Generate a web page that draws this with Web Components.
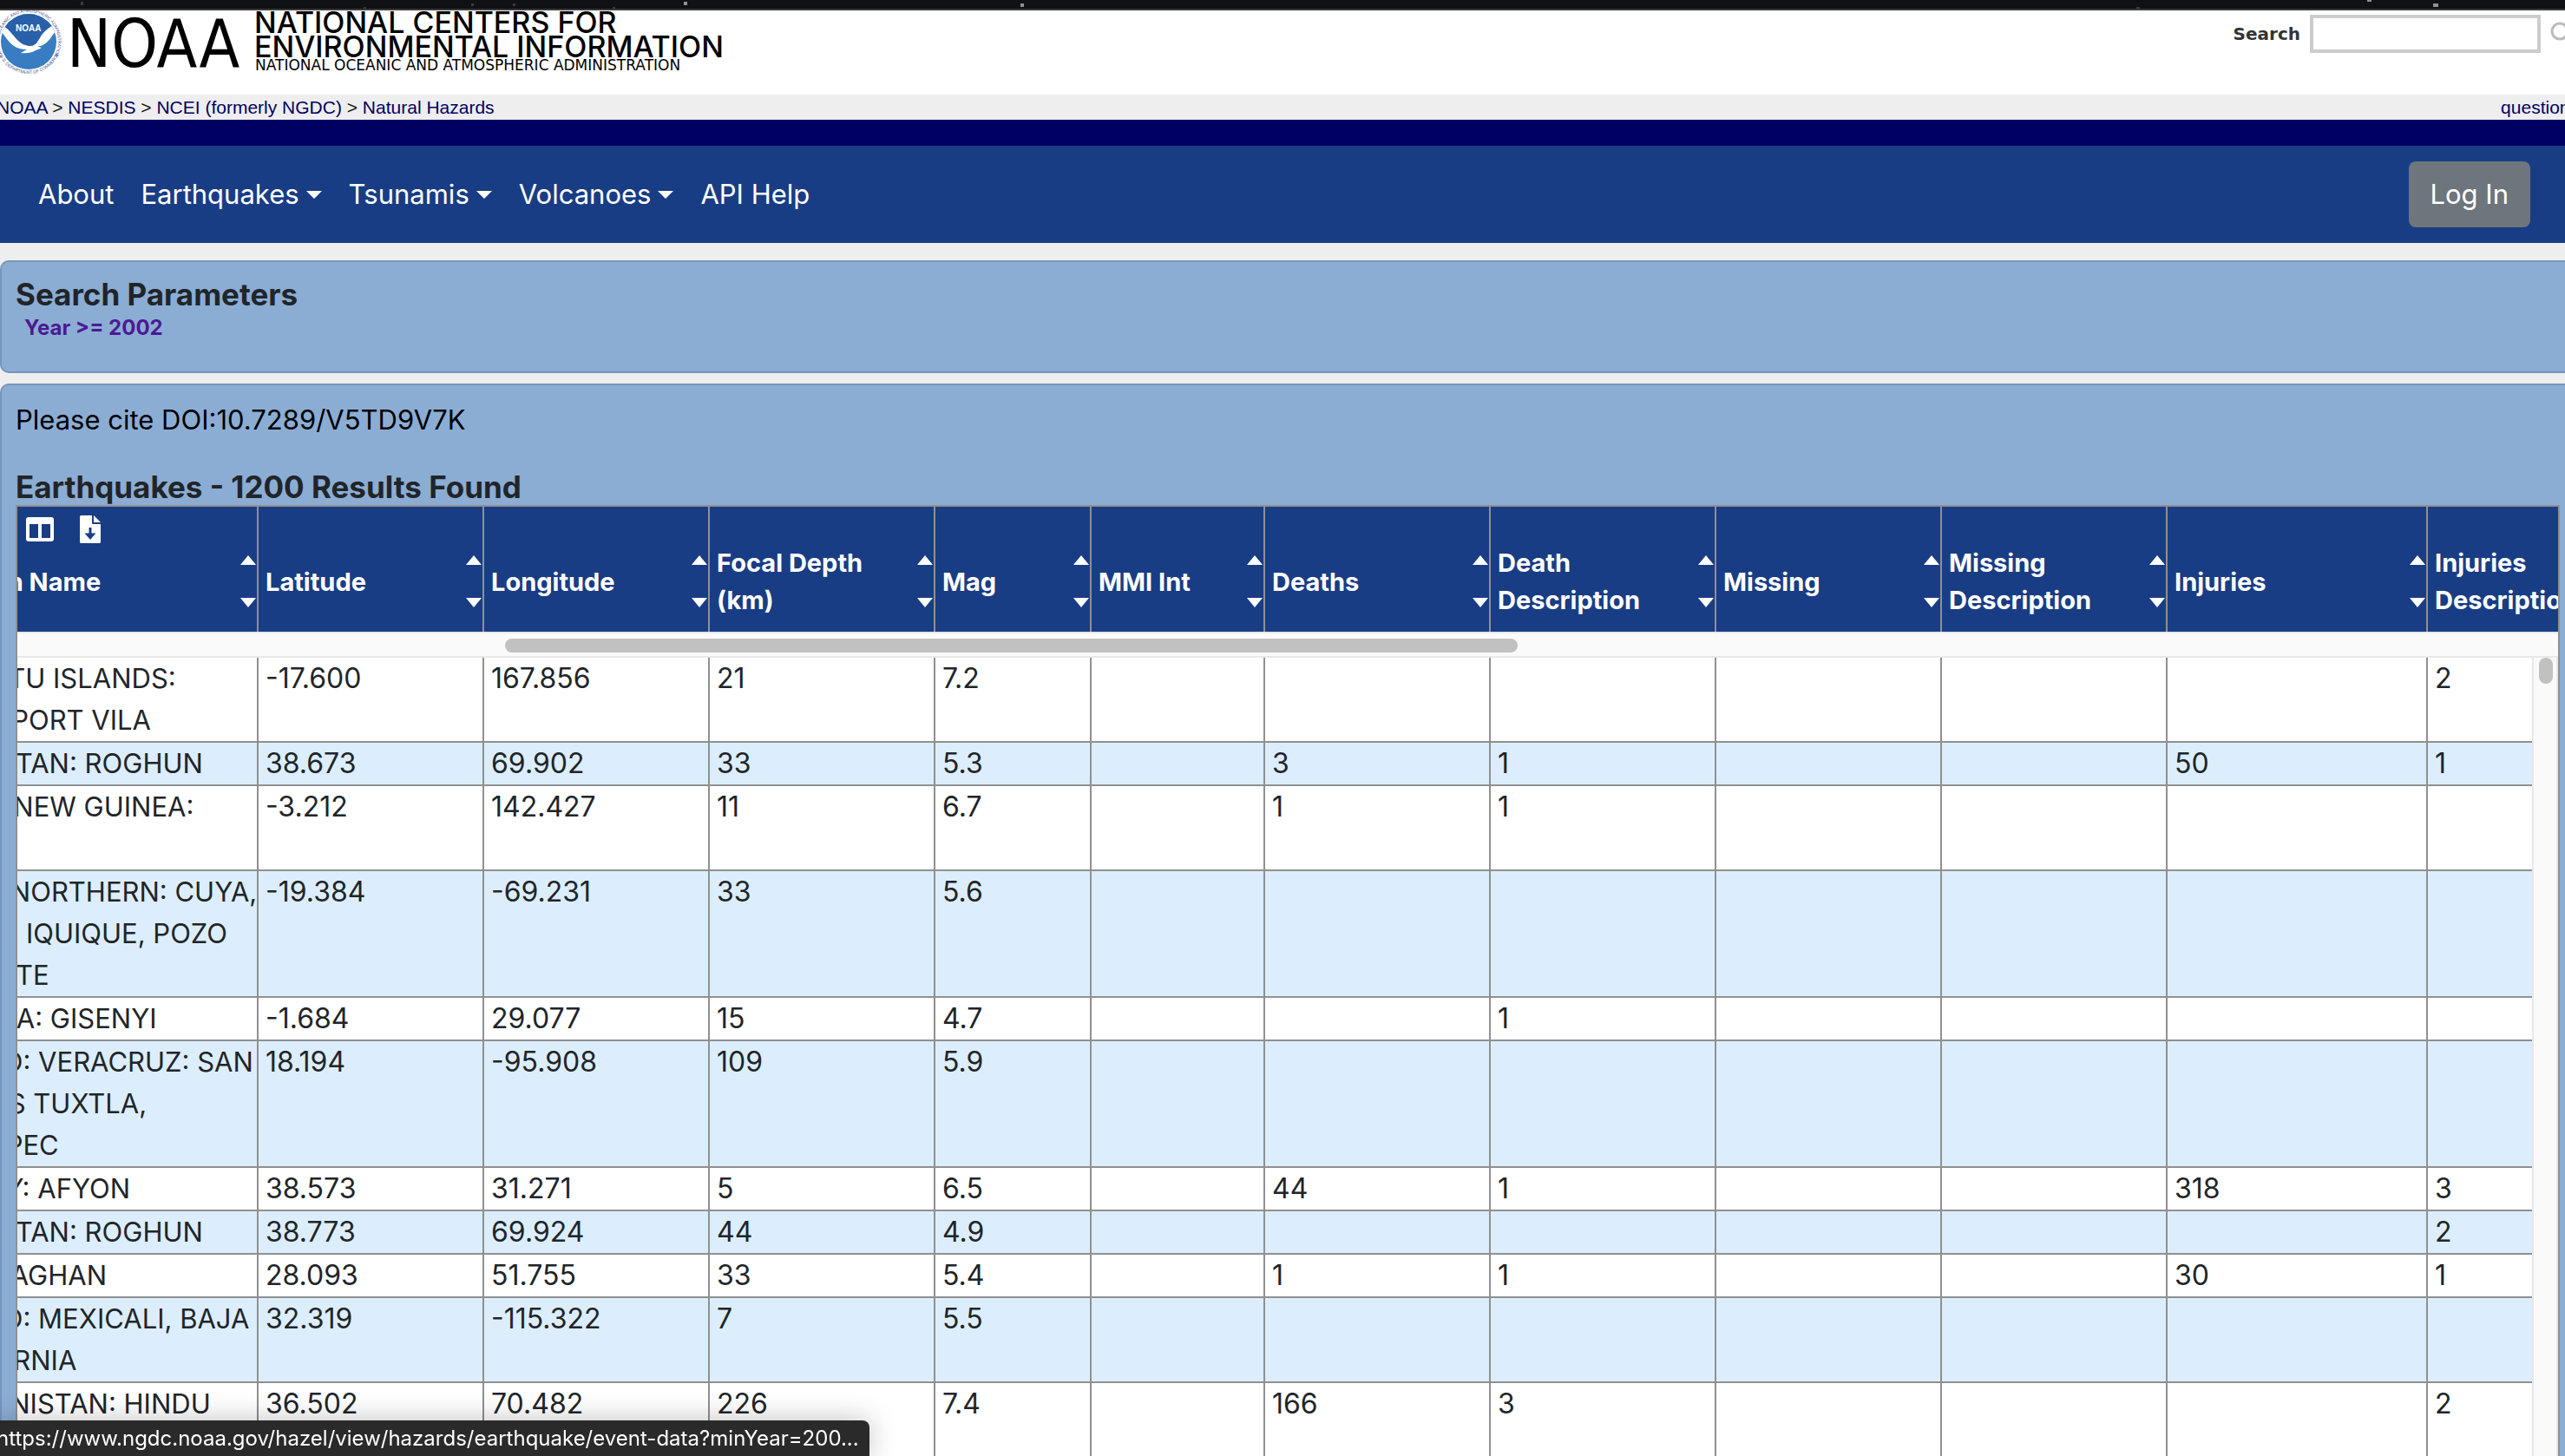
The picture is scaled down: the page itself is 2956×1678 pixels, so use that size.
<!DOCTYPE html>
<html lang="en">
<head>
<meta charset="utf-8">
<title>NCEI Hazards - Significant Earthquakes</title>
<style>
  html, body { margin: 0; height: 100%; }
  body { background: #eee; font: 31px/48px Inter, "Liberation Sans", sans-serif; color: #212529; overflow: hidden; }
  .page { display: flex; flex-direction: column; height: 100%; margin-right: -12px; }
  .cards { display: flex; flex-direction: column; gap: 12px; flex: 1; min-height: 0; margin-top: 20px; }
  .results { flex: 1; min-height: 0; padding-bottom: 0; border-bottom: 0; }
</style>
</head>
<body>
<div class="page">
  <star-strip></star-strip>
  <noaa-masthead></noaa-masthead>
  <crumb-bar></crumb-bar>
  <nav-bar>
    <nav-entry>About</nav-entry>
    <nav-entry menu>Earthquakes</nav-entry>
    <nav-entry menu>Tsunamis</nav-entry>
    <nav-entry menu>Volcanoes</nav-entry>
    <nav-entry>API Help</nav-entry>
  </nav-bar>
  <main class="cards">
    <panel-card heading="Search Parameters"><search-filter>Year &gt;= 2002</search-filter></panel-card>
    <panel-card class="results" heading="Earthquakes - 1200 Results Found">
      <cite-note slot="lead">Please cite DOI:10.7289/V5TD9V7K</cite-note>
      <results-grid></results-grid>
    </panel-card>
  </main>
</div>
<link-status>https://www.ngdc.noaa.gov/hazel/view/hazards/earthquake/event-data?minYear=200...</link-status>

<script>
const define = (name, html, setup) => customElements.define(name, class extends HTMLElement {
  constructor() {
    super();
    this.attachShadow({ mode: 'open' }).innerHTML = html;
  }
  connectedCallback() { if (setup) setup(this, this.shadowRoot); }
});

define('star-strip', `
<style>
  :host { display: block; flex: none; height: 10px; background: #101114; border-bottom: 2px solid #3b3839; overflow: hidden; }
  svg { display: block; }
</style>
<svg width="2956" height="10" aria-hidden="true">
  <g fill="#3a3c42"><rect x="93" y="2" width="3" height="4"/><rect x="543" y="4" width="3" height="3"/><rect x="591" y="4" width="3" height="3"/><rect x="419" y="8" width="3" height="2"/><rect x="2462" y="8" width="4" height="2"/><rect x="706" y="8" width="3" height="2"/></g>
  <g fill="#8d9099"><rect x="788" y="2" width="4" height="4"/><rect x="2804" y="4" width="6" height="4"/><rect x="2728" y="0" width="5" height="2"/><rect x="1176" y="4" width="4" height="4"/></g>
</svg>`);

define('noaa-masthead', `
<style>
  :host { display: flex; flex: none; justify-content: space-between; align-items: flex-start; height: 97px; background: #fff; }
  svg { display: block; }
  form { display: flex; align-items: center; gap: 11px; margin: 5px 3px 0 0; }
  label { font: bold 20px/24px "DejaVu Sans", sans-serif; color: #333; }
  input { box-sizing: border-box; width: 266px; height: 44px; border: 4px solid #ccc; background: #fff; font-size: 24px; padding: 0 8px; }
  button { border: 0; background: none; padding: 0; }
</style>
<svg width="900" height="84" role="img" aria-label="NOAA National Centers for Environmental Information">
  <defs>
    <clipPath id="disc"><circle cx="33" cy="36" r="32"/></clipPath>
    <path id="ringTop" d="M3.600 53A34 34 0 1 1 62.400 53"/>
    <path id="ringLow" d="M-2 49A37.500 37.500 0 0 0 68 49"/>
  </defs>
  <g clip-path="url(#disc)">
    <rect y="3" width="68" height="68" fill="#387dc2"/>
    <path d="M0 0H68V18Q56 32 44 40L33 42L22 38Q10 32 0 12Z" fill="#2860aa"/>
    <path d="M-1 16C8 18 14 28 20 34C25 39 30 41 35 41C42 41 44 34 49 27C53 22 59 18 65 15L64 24C58 32 56 36 51 39C48 41 46 41 43 41.500L48 43Q45 45 41 46Q35 50 24 49L31 45Q22 45 16 41C8 35 4 26 -1 22Z" fill="#fff"/>
  </g>
  <text x="18" y="24" font-family="Liberation Sans" font-weight="bold" font-size="10" fill="#fff">NOAA</text>
  <g font-family="Liberation Sans" font-size="5" fill="#3f4f8c">
    <text><textPath href="#ringTop">NATIONAL OCEANIC AND ATMOSPHERIC ADMINISTRATION</textPath></text>
    <text><textPath href="#ringLow" startOffset="4">U.S. DEPARTMENT OF COMMERCE</textPath></text>
  </g>
  <g fill="#000">
    <text x="77" y="65" font-family="DejaVu Sans Condensed, Liberation Sans" font-size="76">NOAA</text>
    <g font-family="Inter" font-size="34" font-weight="500">
      <text x="293" y="26">NATIONAL CENTERS FOR</text>
      <text x="293" y="54">ENVIRONMENTAL INFORMATION</text>
    </g>
    <text x="294" y="69" font-family="DejaVu Sans" font-size="17">NATIONAL OCEANIC AND ATMOSPHERIC ADMINISTRATION</text>
  </g>
</svg>
<form>
  <label for="q">Search</label>
  <input id="q" type="text">
  <button type="button" aria-label="Search"><svg width="26" height="32" viewBox="0 0 26 32"><circle cx="11" cy="13" r="9" fill="none" stroke="#bbb" stroke-width="3"/><path d="M17 20l7 8" stroke="#bbb" stroke-width="4"/></svg></button>
</form>`);

define('crumb-bar', `
<style>
  :host { display: flex; flex: none; justify-content: space-between; margin: 0 -4px; background: #eee; border-bottom: 30px solid #000062; font: 21px/29px "Liberation Sans", sans-serif; color: #111; }
  nav { white-space: nowrap; }
  a { color: #000064; text-decoration: none; }
</style>
<nav><a href="#noaa">NOAA</a> &gt; <a href="#nesdis">NESDIS</a> &gt; <a href="#ncei">NCEI (formerly NGDC)</a> &gt; <a href="#hazards">Natural Hazards</a></nav>
<a href="#questions">questions</a>`);

define('nav-bar', `
<style>
  :host { display: flex; flex: none; align-items: center; justify-content: space-between; height: 112px; padding: 0 52px 0 44px; background: #193d84; color: #fff; }
  nav { display: flex; gap: 31px; }
  button { font: inherit; color: #fff; background: #6e757c; border: 0; border-radius: 8px; padding: 14px 25px; }
</style>
<nav><slot></slot></nav>
<button type="button">Log In</button>`);

define('nav-entry', `
<style>
  :host { display: block; }
  a { display: flex; align-items: center; gap: 8px; color: #fff; text-decoration: none; }
  :host([menu]) a::after { content: ""; border: 9px solid transparent; border-top-color: #fff; border-bottom: 0; }
</style>
<a href="#menu"><slot></slot></a>`);

define('panel-card', `
<style>
  :host { display: flex; flex-direction: column; background: #8badd4; border: 2px solid #7596bb; border-radius: 10px; padding: 16px; }
  h2 { margin: 0; font: bold 35px/42px Inter, sans-serif; }
</style>
<slot name="lead"></slot><h2></h2><slot></slot>`,
(el, root) => { root.querySelector('h2').textContent = el.getAttribute('heading'); });

define('search-filter', `
<style>
  :host { display: block; padding-left: 10px; margin-bottom: 16px; font-size: 24px; line-height: 36px; font-weight: bold; }
  a { color: #4b1a93; text-decoration: none; }
</style><a href="#year"><slot></slot></a>`);

define('cite-note', `
<style>:host { display: block; color: #000; margin-bottom: 32px; }</style><slot></slot>`);

const columns = [['Location Name', 400], ['Latitude', 260], ['Longitude', 260], ['Focal Depth (km)', 260], ['Mag', 180],
  ['MMI Int', 200], ['Deaths', 260], ['Death Description', 260], ['Missing', 260], ['Missing Description', 260],
  ['Injuries', 300], ['Injuries Description', 260]];

const rows = [
  ['VANUATU ISLANDS:|EFATE, PORT VILA', '-17.600', '167.856', '21', '7.2', '', '', '', '', '', '', '2'],
  ['TAJIKISTAN: ROGHUN', '38.673', '69.902', '33', '5.3', '', '3', '1', '', '', '50', '1'],
  ['PAPUA NEW GUINEA:|&nbsp;', '-3.212', '142.427', '11', '6.7', '', '1', '1', '', '', '', ''],
  ['CHILE: NORTHERN: CUYA,|HUARA, IQUIQUE, POZO|ALMONTE', '-19.384', '-69.231', '33', '5.6', '', '', '', '', '', '', ''],
  ['RWANDA: GISENYI', '-1.684', '29.077', '15', '4.7', '', '', '1', '', '', '', ''],
  ['MEXICO: VERACRUZ: SAN|ANDRES TUXTLA,|COATEPEC', '18.194', '-95.908', '109', '5.9', '', '', '', '', '', '', ''],
  ['TURKEY: AFYON', '38.573', '31.271', '5', '6.5', '', '44', '1', '', '', '318', '3'],
  ['TAJIKISTAN: ROGHUN', '38.773', '69.924', '44', '4.9', '', '', '', '', '', '', '2'],
  ['IRAN: JAGHAN', '28.093', '51.755', '33', '5.4', '', '1', '1', '', '', '30', '1'],
  ['MEXICO: MEXICALI, BAJA|CALIFORNIA', '32.319', '-115.322', '7', '5.5', '', '', '', '', '', '', ''],
  ['AFGHANISTAN: HINDU|&nbsp;', '36.502', '70.482', '226', '7.4', '', '166', '3', '', '', '', '2']
];

const cols = '<colgroup>' + columns.map(c => `<col style="width:${c[1]}px">`).join('') + '</colgroup>';

define('results-grid', `
<style>
  :host { --scrolled: 124px; --line: #909090; display: flex; flex-direction: column; flex: 1; min-height: 0; border: 2px solid var(--line); border-bottom: 0; overflow: hidden; background: #fff; position: relative; }
  .head, .view { overflow: hidden; }
  .head { flex: none; background: #193d84; }
  table { table-layout: fixed; width: 3162px; margin-left: calc(-1 * var(--scrolled)); border-collapse: separate; border-spacing: 0; }
  col:first-child { width: 402px !important; }
  th, td { box-sizing: border-box; border-right: 2px solid var(--line); text-align: left; padding: 0 0 0 8px; }
  th { height: 144px; padding-top: 28px; vertical-align: middle; color: #fff; font: bold 29px/43px Inter, sans-serif; }
  .label { display: flex; align-items: center; justify-content: space-between; }
  .sort { display: flex; flex-direction: column; justify-content: space-between; height: 60px; margin-right: 1px; }
  .sort button { padding: 0; background: none; border: 9px solid transparent; width: 0; height: 0; }
  .sort .up { border-top: 0; border-bottom: 11px solid #fff; }
  .sort .down { border-bottom: 0; border-top: 11px solid #fff; }
  td { vertical-align: top; border-bottom: 2px solid var(--line); white-space: nowrap; background: #fff; font-size: 32px; }
  td:first-child { font-size: 31px; }
  tr:nth-child(even) td { background: #dceefd; }
  .tools { position: absolute; left: 10px; top: 10px; display: flex; align-items: center; gap: 30px; }
  .tools button { padding: 0; border: 0; background: none; display: block; height: 32px; }
  .tools svg { display: block; }
  .hbar { flex: none; box-sizing: border-box; height: 30px; background: #fafafa; border: solid #e8e8e8; border-width: 2px 0; padding: 6px 0 0 562px; }
  .hbar i { display: block; width: 1167px; height: 16px; border-radius: 8px; background: #c1c1c1; }
  .body { display: flex; flex: 1; min-height: 0; }
  .view { flex: 1; min-width: 0; }
  .vbar { flex: none; box-sizing: border-box; width: 30px; background: #fafafa; border: solid #e8e8e8; border-width: 0 2px; padding-left: 6px; }
  .vbar i { display: block; width: 16px; height: 30px; border-radius: 8px; background: #c1c1c1; }
</style>
<div class="head"><table>${cols}<thead><tr>${columns.map(([name]) => `<th scope="col"><div class="label"><span>${name.replace('Depth (', 'Depth<br>(').replace(' Desc', '<br>Desc')}</span><span class="sort"><button class="up" type="button" aria-label="Sort ascending"></button><button class="down" type="button" aria-label="Sort descending"></button></span></div></th>`).join('')}</tr></thead></table></div>
<div class="hbar"><i></i></div>
<div class="body">
  <div class="view"><table>${cols}<tbody>${rows.map(r => '<tr>' + r.map(v => `<td>${v.replace(/\|/g, '<br>')}</td>`).join('') + '</tr>').join('')}</tbody></table></div>
  <div class="vbar"><i></i></div>
</div>
<div class="tools">
  <button type="button" aria-label="Choose columns"><svg width="32" height="32" viewBox="0 0 32 32"><path fill="#fff" fill-rule="evenodd" d="M3 2H29Q32 2 32 5V27Q32 30 29 30H3Q0 30 0 27V5Q0 2 3 2ZM4 10V26H14V10ZM18 10V26H28V10Z"/></svg></button>
  <button type="button" aria-label="Download"><svg width="24" height="32" viewBox="0 0 24 32"><path fill="#fff" fill-rule="evenodd" d="M1.500 0H14V8.500Q14 10 15.500 10H24V30.500Q24 32 22.500 32H1.500Q0 32 0 30.500V1.500Q0 0 1.500 0ZM10.500 14V20.500H5.500L12 28L18.500 20.500H13.500V14Z"/><path fill="#fff" d="M16 0L24 8H16Z"/></svg></button>
</div>`);

define('link-status', `
<style>
  :host { position: fixed; left: -4px; bottom: 0; box-sizing: border-box; height: 41px; padding-right: 12px; background: #2a2a2a; color: #fff; border-top-right-radius: 8px; box-shadow: 0 0 32px rgba(0,0,0,.25); font-size: 24px; line-height: 41px; white-space: nowrap; }
</style><slot></slot>`);
</script>
</body>
</html>
